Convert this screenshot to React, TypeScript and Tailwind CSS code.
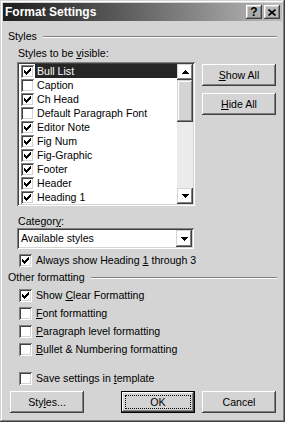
import React from 'react';

// pixel pattern of the classic check mark
const CHECK = ['......#', '.....##', '#...###', '##.###.', '#####..', '.###...', '..#....'];

const RAISED =
  'shadow-[inset_-1px_-1px_#404040,inset_1px_1px_#ffffff,inset_-2px_-2px_#808080,inset_2px_2px_#d4d4d4]';
const SCROLL_BTN =
  'shadow-[inset_-1px_-1px_#404040,inset_1px_1px_#d4d4d4,inset_-2px_-2px_#808080,inset_2px_2px_#ffffff]';
const SUNKEN =
  'shadow-[inset_1px_1px_#808080,inset_-1px_-1px_#ffffff,inset_2px_2px_#404040,inset_-2px_-2px_#d4d4d4]';

function CheckMark() {
  return (
    <svg width="7" height="7" viewBox="0 0 7 7" shapeRendering="crispEdges">
      {CHECK.flatMap((row, y) =>
        row
          .split('')
          .map((c, x) =>
            c === '#' ? <rect key={`${x}-${y}`} x={x} y={y} width="1" height="1" fill="#000" /> : null
          )
      )}
    </svg>
  );
}

function Arrow({ up }: { up?: boolean }) {
  const rows = [1, 3, 5, 7];
  const list = up ? rows : [...rows].reverse();
  return (
    <svg width="7" height="4" viewBox="0 0 7 4" shapeRendering="crispEdges">
      {list.map((w, i) => (
        <rect key={i} x={(7 - w) / 2} y={i} width={w} height="1" fill="#000" />
      ))}
    </svg>
  );
}

function Box({ checked }: { checked?: boolean }) {
  return (
    <span className={`flex h-[13px] w-[13px] shrink-0 items-center justify-center bg-white ${SUNKEN}`}>
      {checked && <CheckMark />}
    </span>
  );
}

function GroupHeader({ label }: { label: string }) {
  return (
    <div className="flex h-[13px] items-center">
      <span>{label}</span>
      <div className="ml-[6px] h-[2px] flex-1 border-t border-b border-t-[#808080] border-b-white" />
    </div>
  );
}

function Check({ checked, children }: { checked?: boolean; children: React.ReactNode }) {
  return (
    <div className="flex h-[13px] items-center pl-[11px]">
      <Box checked={checked} />
      <span className="ml-[4px]">{children}</span>
    </div>
  );
}

function Button({ children, focused, className = '' }: { children: React.ReactNode; focused?: boolean; className?: string }) {
  if (focused) {
    return (
      <div className={`relative h-[22px] w-[74px] border border-black ${className}`}>
        <div className={`flex h-full w-full items-center justify-center ${RAISED}`}>{children}</div>
        <span className="absolute inset-[3px] border border-dotted border-black" />
      </div>
    );
  }
  return (
    <div className={`flex h-[22px] w-[74px] items-center justify-center ${RAISED} ${className}`}>{children}</div>
  );
}

const styles = [
  { name: 'Bull List', checked: true, selected: true },
  { name: 'Caption', checked: false },
  { name: 'Ch Head', checked: true },
  { name: 'Default Paragraph Font', checked: false },
  { name: 'Editor Note', checked: true },
  { name: 'Fig Num', checked: true },
  { name: 'Fig-Graphic', checked: true },
  { name: 'Footer', checked: true },
  { name: 'Header', checked: true },
  { name: 'Heading 1', checked: true },
];

export default function App() {
  return (
    <div
      className="flex h-[422px] w-[285px] flex-col bg-[#d4d4d4] p-[3px] font-['Liberation_Sans',Arial,sans-serif] text-[10.6px] leading-[13px] text-black shadow-[inset_-1px_-1px_#404040,inset_1px_1px_#d4d4d4,inset_-2px_-2px_#808080,inset_2px_2px_#ffffff]"
    >
      {/* title bar */}
      <div className="flex h-[18px] items-center bg-gradient-to-r from-[#1e1e1e] to-[#bdbdbd] pl-[2px] pr-[2px]">
        <span className="flex-1 text-[12px] font-bold text-white">Format Settings</span>
        <div className={`flex h-[14px] w-[16px] items-center justify-center text-[12px] font-bold ${RAISED}`}>?</div>
        <div className={`ml-[2px] flex h-[14px] w-[16px] items-center justify-center ${RAISED}`}>
          <svg width="8" height="7" viewBox="0 0 8 7">
            <path d="M0.5 0.5 L7.5 6.5 M7.5 0.5 L0.5 6.5" stroke="#000" strokeWidth="1.6" />
          </svg>
        </div>
      </div>

      <div className="flex flex-1 flex-col px-[5px]">
        <div className="mt-[9px]">
          <GroupHeader label="Styles" />
        </div>
        <div className="mt-[4px] h-[13px] pl-[10px]">
          Styles to be <span className="underline">v</span>isible:
        </div>

        <div className="mt-[2px] flex pl-[9px]">
          <div className={`flex h-[144px] w-[178px] bg-white p-[2px] ${SUNKEN}`}>
            <div className="flex flex-1 flex-col">
              {styles.map((s) => (
                <div key={s.name} className="flex h-[14px] items-center pl-[2px]">
                  <Box checked={s.checked} />
                  <span
                    className={`ml-[1px] flex h-full flex-1 items-center pl-[2px] ${s.selected ? 'bg-[#262626] text-white' : ''}`}
                  >
                    {s.name}
                  </span>
                </div>
              ))}
            </div>
            <div className="flex w-[16px] flex-col">
              <div className={`flex h-[16px] items-center justify-center ${SCROLL_BTN}`}>
                <Arrow up />
              </div>
              <div className={`h-[42px] bg-[#d4d4d4] ${SCROLL_BTN}`} />
              <div className="flex-1 bg-[#ebebeb]" />
              <div className={`flex h-[16px] items-center justify-center ${SCROLL_BTN}`}>
                <Arrow />
              </div>
            </div>
          </div>
          <div className="ml-[7px] mt-[2px] flex flex-col gap-[7px]">
            <Button>
              <span>
                <span className="underline">S</span>how All
              </span>
            </Button>
            <Button>
              <span>
                <span className="underline">H</span>ide All
              </span>
            </Button>
          </div>
        </div>

        <div className="mt-[9px] h-[13px] pl-[10px]">
          Categor<span className="underline">y</span>:
        </div>
        <div className="pl-[9px]">
          <div className={`flex h-[21px] w-[177px] bg-white p-[2px] ${SUNKEN}`}>
            <span className="flex flex-1 items-center pl-[2px]">Available styles</span>
            <div className={`flex w-[16px] items-center justify-center ${SCROLL_BTN}`}>
              <Arrow />
            </div>
          </div>
        </div>

        <div className="mt-[5px]">
          <Check checked>
            Always show Heading <span className="underline">1</span> through 3
          </Check>
        </div>

        <div className="mt-[4px]">
          <GroupHeader label="Other formatting" />
        </div>

        <div className="mt-[5px] flex flex-col gap-[5px]">
          <Check checked>
            Show <span className="underline">C</span>lear Formatting
          </Check>
          <Check>
            <span className="underline">F</span>ont formatting
          </Check>
          <Check>
            <span className="underline">P</span>aragraph level formatting
          </Check>
          <Check>
            <span className="underline">B</span>ullet &amp; Numbering formatting
          </Check>
        </div>

        <div className="mt-[16px]">
          <Check>
            Save settings in <span className="underline">t</span>emplate
          </Check>
        </div>

        <div className="mt-[6px] flex pl-[2px]">
          <Button>
            <span>
              Sty<span className="underline">l</span>es...
            </span>
          </Button>
          <Button focused className="ml-[37px]">
            OK
          </Button>
          <Button className="ml-[7px]">Cancel</Button>
        </div>
      </div>
    </div>
  );
}
